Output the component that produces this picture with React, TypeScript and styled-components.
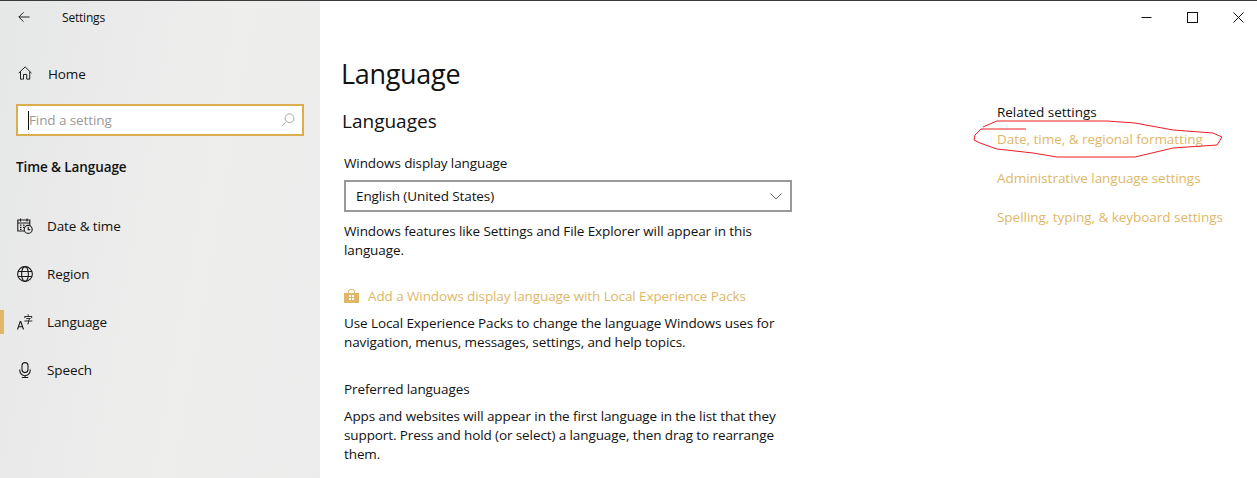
import React from "react";
import styled, { createGlobalStyle } from "styled-components";

const Global = createGlobalStyle`
  html, body { margin: 0; padding: 0; background: #fff; }
  body { font-family: "Open Sans", "Noto Sans", "Liberation Sans", sans-serif; color: #111; }
  * { box-sizing: border-box; }
`;

const accent = "#e0b768";
const bodyText = `
  font-size: 13.5px;
  letter-spacing: -0.1px;
`;

const Page = styled.div`
  position: relative;
  display: flex;
  width: 1257px;
  height: 478px;
  overflow: hidden;
  border-top: 1px solid #3a3a3a;
  background: #fff;
`;
const Sidebar = styled.aside`
  width: 320px;
  flex: none;
  background: linear-gradient(100deg, #e6e7e7 0%, #eeeeed 60%, #ececec 100%);
  display: flex;
  flex-direction: column;
`;
const TitleBar = styled.div`
  height: 33px;
  display: flex;
  align-items: center;
  padding-left: 18px;
  font-size: 12px;
  letter-spacing: -0.2px;
`;
const BackIcon = styled.svg`
  width: 12px;
  height: 12px;
  margin-right: 32px;
  position: relative;
  top: -1px;
`;
const HomeRow = styled.div`
  margin-top: 16px;
  height: 48px;
  display: flex;
  align-items: center;
  ${bodyText}
  padding-left: 18px;
`;
const NavIcon = styled.svg`
  width: 16px;
  height: 16px;
  flex: none;
  margin-right: 14px;
`;
const SearchBox = styled.div`
  margin: 6px 16px 0;
  height: 32px;
  border: 2px solid #dcae50;
  background: #fff;
  display: flex;
  align-items: center;
  padding: 0 7px 0 10px;
  ${bodyText}
  color: #9a9a9a;
`;
const Caret = styled.span`
  width: 1px;
  height: 19px;
  background: #111;
  flex: none;
`;
const Placeholder = styled.span`
  flex: 1;
`;
const SectionTitle = styled.div`
  margin-top: 21px;
  height: 20px;
  line-height: 20px;
  padding-left: 16px;
  font-size: 13.5px;
  font-weight: 600;
  letter-spacing: -0.1px;
`;
const NavList = styled.nav`
  margin-top: 25px;
  display: flex;
  flex-direction: column;
`;
const NavItem = styled.div<{ $active?: boolean }>`
  position: relative;
  height: 48px;
  display: flex;
  align-items: center;
  padding-left: 17px;
  ${bodyText}
  &::before {
    content: "";
    display: ${(p) => (p.$active ? "block" : "none")};
    position: absolute;
    left: 0;
    top: 12px;
    width: 4px;
    height: 24px;
    background: ${accent};
  }
`;
const Main = styled.main`
  flex: 1;
  display: flex;
  position: relative;
`;
const Content = styled.section`
  width: 472px;
  margin-left: 22px;
  flex: none;
  ${bodyText}
`;
const PageTitle = styled.h1`
  margin: 53px 0 0 -1px;
  font-size: 27px;
  font-weight: 400;
  line-height: 40px;
  letter-spacing: -0.3px;
`;
const SubTitle = styled.h2`
  margin: 12px 0 0;
  font-size: 19px;
  font-weight: 400;
  line-height: 30px;
  letter-spacing: 0;
`;
const Body = styled.div`
  padding-left: 2px;
`;
const Label = styled.div`
  margin-top: 17px;
  line-height: 20px;
`;
const Select = styled.div`
  margin-top: 7px;
  width: 448px;
  height: 32px;
  border: 2px solid #999;
  display: flex;
  align-items: center;
  justify-content: space-between;
  padding: 0 8px 0 10px;
`;
const Chevron = styled.svg`
  width: 12px;
  height: 7px;
`;
const Paragraph = styled.p<{ $gap: number }>`
  margin: ${(p) => p.$gap}px 0 0;
  width: 440px;
  line-height: 19px;
`;
const PackLink = styled.div`
  margin-top: 26px;
  display: flex;
  align-items: center;
  gap: 9px;
  line-height: 20px;
  color: ${accent};
`;
const Heading = styled.div`
  margin-top: 27px;
  line-height: 20px;
`;
const Aside = styled.aside`
  margin-left: 183px;
  padding-top: 101px;
  font-size: 13.5px;
  letter-spacing: -0.03px;
`;
const RelatedTitle = styled.div`
  line-height: 20px;
`;
const RelatedLink = styled.div<{ $gap: number }>`
  margin-top: ${(p) => p.$gap}px;
  line-height: 20px;
  color: ${accent};
  white-space: nowrap;
`;
const WindowControls = styled.div`
  position: absolute;
  top: 0;
  right: -4px;
  display: flex;
`;
const ControlButton = styled.div`
  width: 46px;
  height: 32px;
  display: flex;
  align-items: center;
  justify-content: center;
`;
const ControlIcon = styled.svg`
  width: 11px;
  height: 11px;
`;
const Annotation = styled.svg`
  position: absolute;
  left: 0;
  top: -1px;
  width: 1257px;
  height: 478px;
  pointer-events: none;
`;

const stroke = { fill: "none", stroke: "#1a1a1a", strokeWidth: 1.1 } as const;

export default function App() {
  return (
    <>
      <Global />
      <Page>
        <Sidebar>
          <TitleBar>
            <BackIcon viewBox="0 0 14 14" {...stroke}>
              <path d="M13.5 7H1M6.5 1.5 1 7l5.5 5.5" />
            </BackIcon>
            Settings
          </TitleBar>
          <HomeRow>
            <NavIcon viewBox="0 0 18 18" {...stroke}>
              <path d="M.8 8 8 1l7.2 7M2.8 6.5v8.3h3.4V9.5h3.6v5.3h3.4V6.5" />
            </NavIcon>
            Home
          </HomeRow>
          <SearchBox>
            <Caret />
            <Placeholder>Find a setting</Placeholder>
            <svg width="14" height="14" viewBox="0 0 14 14" fill="none" stroke="#a8a8a8" strokeWidth="1">
              <circle cx="8.6" cy="5.2" r="4.4" />
              <path d="M5.4 8.4 .8 13.2" />
            </svg>
          </SearchBox>
          <SectionTitle>Time &amp; Language</SectionTitle>
          <NavList>
            <NavItem>
              <NavIcon viewBox="0 0 16 16" {...stroke}>
                <path d="M7 13H.8V2h12v5.5M.8 5h12M3.5 .5v3M10 .5v3" />
                <path d="M3 7.2h1.5M6 7.2h1.5M3 9.4h1.5M6 9.4h1.5M3 11.4h1.5" strokeWidth="1.3" />
                <circle cx="11.2" cy="11.4" r="4" />
                <path d="M11.2 9v2.6h2" />
              </NavIcon>
              Date &amp; time
            </NavItem>
            <NavItem>
              <NavIcon viewBox="0 0 16 16" {...stroke}>
                <circle cx="8" cy="8" r="7.4" />
                <ellipse cx="8" cy="8" rx="3.4" ry="7.4" />
                <path d="M1 5.5h14M1 10.5h14" />
              </NavIcon>
              Region
            </NavItem>
            <NavItem $active>
              <NavIcon viewBox="0 0 16 16" {...stroke}>
                <path d="M.5 15.5 3.2 7.5h.6l2.7 8M1.5 12.8h4" />
                <path d="M7.5 2.5h7.5M11.2 .3v2.2M7.8 2.5v1.6M14.7 2.5v1.6M9.2 4.5h4.2l-2 1.6v3.6l-1.2.3M7.3 7h8" strokeWidth="0.9" />
              </NavIcon>
              Language
            </NavItem>
            <NavItem>
              <NavIcon viewBox="0 0 16 16" {...stroke}>
                <rect x="5" y=".6" width="6" height="10" rx="3" />
                <path d="M2.8 7.5v1a5.2 5.2 0 0 0 10.4 0v-1M8 13.7v1.8M4.8 15.5h6.4" />
              </NavIcon>
              Speech
            </NavItem>
          </NavList>
        </Sidebar>
        <Main>
          <Content>
            <PageTitle>Language</PageTitle>
            <SubTitle>Languages</SubTitle>
            <Body>
              <Label>Windows display language</Label>
              <Select>
                English (United States)
                <Chevron viewBox="0 0 12 7" fill="none" stroke="#666" strokeWidth="1">
                  <path d="M.5 .5 6 6l5.5-5.5" />
                </Chevron>
              </Select>
              <Paragraph $gap={10}>
                Windows features like Settings and File Explorer will appear in this language.
              </Paragraph>
              <PackLink>
                <svg width="15" height="15" viewBox="0 0 15 15">
                  <path d="M0 4h15v10H0z" fill={accent} />
                  <path d="M4.5 4V2.5a2 2 0 0 1 2-2h2a2 2 0 0 1 2 2V4" fill="none" stroke={accent} />
                  <path d="M5 6h2v2H5zM8 6h2v2H8zM5 9h2v2H5zM8 9h2v2H8z" fill="#fff" />
                </svg>
                Add a Windows display language with Local Experience Packs
              </PackLink>
              <Paragraph $gap={8}>
                Use Local Experience Packs to change the language Windows uses for navigation, menus,
                messages, settings, and help topics.
              </Paragraph>
              <Heading>Preferred languages</Heading>
              <Paragraph $gap={8}>
                Apps and websites will appear in the first language in the list that they support.
                Press and hold (or select) a language, then drag to rearrange them.
              </Paragraph>
            </Body>
          </Content>
          <Aside>
            <RelatedTitle>Related settings</RelatedTitle>
            <RelatedLink $gap={7}>Date, time, &amp; regional formatting</RelatedLink>
            <RelatedLink $gap={19}>Administrative language settings</RelatedLink>
            <RelatedLink $gap={19}>Spelling, typing, &amp; keyboard settings</RelatedLink>
          </Aside>
          <WindowControls>
            <ControlButton>
              <ControlIcon viewBox="0 0 11 11" stroke="#111" fill="none">
                <path d="M.5 5.5h10" />
              </ControlIcon>
            </ControlButton>
            <ControlButton>
              <ControlIcon viewBox="0 0 11 11" stroke="#111" fill="none">
                <rect x=".5" y=".5" width="10" height="10" />
              </ControlIcon>
            </ControlButton>
            <ControlButton>
              <ControlIcon viewBox="0 0 11 11" stroke="#111" fill="none">
                <path d="M.5 .5l10 10M10.5 .5l-10 10" />
              </ControlIcon>
            </ControlButton>
          </WindowControls>
        </Main>
        <Annotation viewBox="0 0 1257 478" fill="none" stroke="#ee1c25" strokeWidth="1">
          <path d="M983 127 997 121H1107L1135 123 1173 130 1213 133 1222 137 1217 145 1173 148 1135 157H1057L1033 153 997 149 980 143 974 140 975 135 981 129H1026" />
        </Annotation>
      </Page>
    </>
  );
}
